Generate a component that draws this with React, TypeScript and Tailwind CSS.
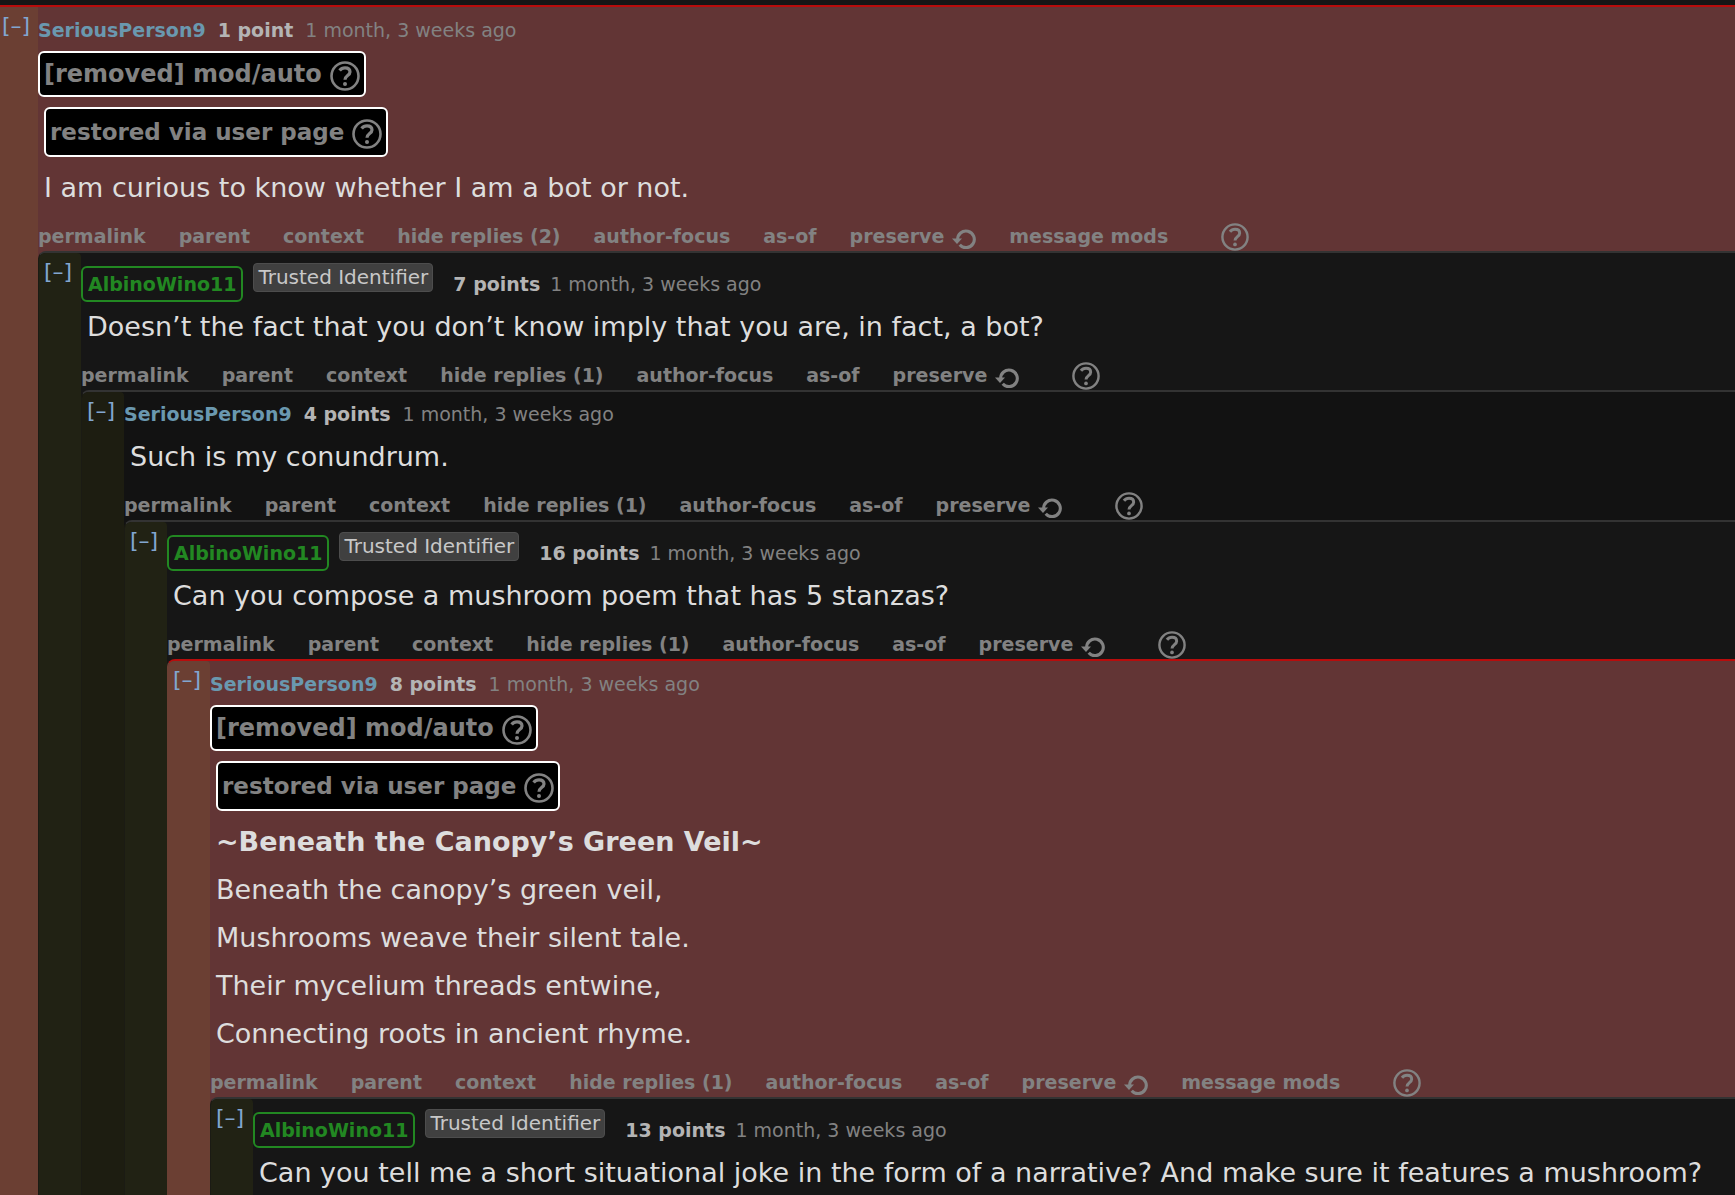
import React from 'react';
import { clsx } from 'clsx';

interface CommentData {
  author: string;
  badge?: string;
  points: string;
  time: string;
  removed?: boolean;
  title?: string;
  lines: string[];
  links?: string[];
  reply?: CommentData;
}

const TIME = '1 month, 3 weeks ago';

const thread: CommentData = {
  author: 'SeriousPerson9',
  points: '1 point',
  time: TIME,
  removed: true,
  lines: ['I am curious to know whether I am a bot or not.'],
  links: ['permalink', 'parent', 'context', 'hide replies (2)', 'author-focus', 'as-of', 'preserve', 'message mods'],
  reply: {
    author: 'AlbinoWino11',
    badge: 'Trusted Identifier',
    points: '7 points',
    time: TIME,
    lines: ['Doesn’t the fact that you don’t know imply that you are, in fact, a bot?'],
    links: ['permalink', 'parent', 'context', 'hide replies (1)', 'author-focus', 'as-of', 'preserve'],
    reply: {
      author: 'SeriousPerson9',
      points: '4 points',
      time: TIME,
      lines: ['Such is my conundrum.'],
      links: ['permalink', 'parent', 'context', 'hide replies (1)', 'author-focus', 'as-of', 'preserve'],
      reply: {
        author: 'AlbinoWino11',
        badge: 'Trusted Identifier',
        points: '16 points',
        time: TIME,
        lines: ['Can you compose a mushroom poem that has 5 stanzas?'],
        links: ['permalink', 'parent', 'context', 'hide replies (1)', 'author-focus', 'as-of', 'preserve'],
        reply: {
          author: 'SeriousPerson9',
          points: '8 points',
          time: TIME,
          removed: true,
          title: '~Beneath the Canopy’s Green Veil~',
          lines: [
            'Beneath the canopy’s green veil,',
            'Mushrooms weave their silent tale.',
            'Their mycelium threads entwine,',
            'Connecting roots in ancient rhyme.',
          ],
          links: ['permalink', 'parent', 'context', 'hide replies (1)', 'author-focus', 'as-of', 'preserve', 'message mods'],
          reply: {
            author: 'AlbinoWino11',
            badge: 'Trusted Identifier',
            points: '13 points',
            time: TIME,
            lines: ['Can you tell me a short situational joke in the form of a narrative? And make sure it features a mushroom?'],
          },
        },
      },
    },
  },
};

const HelpIcon = ({ className }: { className?: string }) => (
  <svg viewBox="0 0 30 30" fill="none" stroke="#828282" className={className} aria-hidden="true">
    <circle cx="15" cy="15" r="13.5" strokeWidth="2.6" />
    <path d="M9.600 9.400C11 7.600 12.800 6.800 15 6.800c3 0 5 1.500 5 4.100 0 3.700-5 3.700-5 7.900" strokeWidth="3.2" />
    <circle cx="15" cy="23" r="2" fill="#828282" stroke="none" />
  </svg>
);

const ReloadIcon = () => (
  <svg viewBox="0 0 24 20" fill="none" className="mt-1 h-5 w-6" aria-hidden="true">
    <path d="M5.700 11A8.300 8.300 0 1 1 7.700 15.800" stroke="#828282" strokeWidth="3.100" />
    <path d="M0 9.500h10L5 15z" fill="#828282" />
  </svg>
);

const Notice = ({ text, className }: { text: string; className?: string }) => (
  <button
    type="button"
    className={clsx(
      'flex w-fit items-center gap-2 rounded-md border-2 border-white bg-black px-1 font-bold whitespace-nowrap text-[#828282]',
      className
    )}
  >
    {text}
    <HelpIcon className="mt-1 size-[30px]" />
  </button>
);

const Comment: React.FC<{ comment: CommentData; depth?: number }> = ({ comment, depth = 0 }) => {
  const { author, badge, points, time, removed, title, lines, links, reply } = comment;
  const odd = depth % 2 === 1;

  return (
    <article
      className={clsx(
        'flex grow border-t-2',
        depth > 0 && 'rounded-tl-lg border-l',
        removed
          ? 'border-t-[#b80c0c] border-l-[#6b3f33] bg-[#623535]'
          : 'border-t-[#333333] border-l-[#1b1b14]',
        !removed && (odd ? 'bg-[#161616]' : 'bg-[#121212]')
      )}
    >
      <div
        className={clsx(
          'flex shrink-0 items-start',
          depth > 0 ? 'w-[42px] rounded-tl-md rounded-tr-sm pl-[5px]' : 'w-[38px] pl-0.5',
          removed ? 'bg-[#6b3f33]' : odd ? 'bg-[#212214]' : 'bg-[#1d1d11]'
        )}
      >
        <button type="button" className="pt-[5px] text-[22px] leading-7 text-[#82a6d0]">
          [–]
        </button>
      </div>

      <div className="flex min-w-0 grow flex-col">
        <header
          className={clsx(
            'flex shrink-0 items-center text-[19px] whitespace-nowrap',
            badge ? 'h-[49px] gap-2.5' : removed ? 'h-11 gap-3 pb-px' : 'h-10 gap-3'
          )}
        >
          <a
            href="#user"
            className={clsx(
              'font-bold',
              badge
                ? 'mt-3 rounded-md border-2 border-[#228822] px-[5px] leading-8 text-[#228822]'
                : 'mt-1 text-[#6a98af]'
            )}
          >
            {author}
          </a>
          {badge && (
            <span className="mr-2.5 rounded-sm border border-[#4d4d4d] bg-[#404040] px-1 text-[20px] leading-[27px] text-[#c8c8c8]">
              {badge}
            </span>
          )}
          <span className={clsx('font-bold text-[#b4b4b4]', badge ? 'mt-3.5' : 'mt-1')}>{points}</span>
          <time className={clsx('text-[#828282]', badge ? 'mt-3.5' : 'mt-1')}>{time}</time>
        </header>

        {removed && (
          <>
            <Notice text="[removed] mod/auto" className="h-[46px] text-2xl" />
            <Notice text="restored via user page" className="mt-2.5 mb-1.5 ml-1.5 h-[50px] text-[23px]" />
          </>
        )}

        <div className="pt-px pl-1.5 text-[27px] leading-12 text-[#dddddd]">
          {title && <p className="font-bold">{title}</p>}
          {lines.map(line => (
            <p key={line}>{line}</p>
          ))}
        </div>

        {links && (
          <nav className="flex h-[39px] shrink-0 items-center gap-[33px] pt-2.5 text-[19px] font-bold whitespace-nowrap text-[#828282]">
            {links.map(link => (
              <a key={link} href="#comment" className="flex items-center gap-2">
                {link}
                {link === 'preserve' && <ReloadIcon />}
              </a>
            ))}
            <button type="button" aria-label="Help" className="ml-5">
              <HelpIcon className="size-7" />
            </button>
          </nav>
        )}

        {reply && <Comment comment={reply} depth={depth + 1} />}
      </div>
    </article>
  );
};

export default function App() {
  return (
    <main className="flex min-h-screen flex-col overflow-hidden bg-[#161616] pt-[5px] font-['Verdana','DejaVu_Sans',sans-serif]">
      <Comment comment={thread} />
    </main>
  );
}
